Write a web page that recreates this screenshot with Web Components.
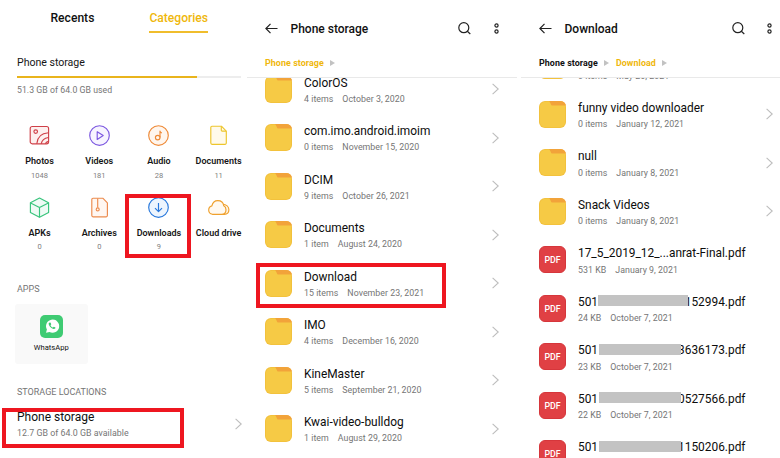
<!DOCTYPE html>
<html lang="en">
<head>
<meta charset="utf-8">
<title>File manager</title>
<style>
html,body{margin:0;height:458px;overflow:hidden;background:#fff}
body{font-family:Roboto,"Liberation Sans",sans-serif;color:#111}
</style>
</head>
<body>
<file-manager></file-manager>
<script>
const define = (name, html) => customElements.define(name, class extends HTMLElement {
  connectedCallback() {
    if (this.shadowRoot) return;
    const root = this.attachShadow({ mode: 'open' });
    const t = document.createElement('template');
    t.innerHTML = typeof html === 'function' ? html(this) : html;
    root.append(t.content.cloneNode(true));
  }
});

const icons = {
  photos: ['#cf4048', '<rect x="1.2" y="1.5" width="18.4" height="17.3" rx="2" fill="#fdf0ef"/><circle cx="6.7" cy="6.6" r="1.8"/><path d="M7.8 18.8C8.3 12.5 12.5 8.2 19.4 7.8M12.2 18.8C12.8 15.4 15.2 13.2 19.4 12.5M16.4 18.8C16.8 17.6 17.6 16.8 19.4 16.4"/>'],
  videos: ['#7c58e0', '<circle cx="10.5" cy="10.5" r="9.8" fill="#f7f4ff"/><path d="M8.2 6.7v7.8l6-3.9z"/>'],
  audio: ['#ee8a38', '<circle cx="10.5" cy="10.5" r="9.8" fill="#fff6ee"/><circle cx="9.7" cy="12.6" r="2.3"/><path d="M12 12.6V6.1c0 1.3.7 1.7 1.9 1.7"/>'],
  documents: ['#edc52c', '<path d="M3.900 1.200h9.500l4.900 4.900v12c0 .8-.4 1.200-1.100 1.200H4c-.8 0-1.200-.4-1.200-1.200V2.400c0-.8.4-1.200 1.100-1.200z" fill="#fffaea"/><path d="M13.300 1.400v3.900c0 .5.3.8.8.8h4"/>'],
  apks: ['#38c47c', '<path d="M10.500 1l9.100 4.800v9.600l-9.100 4.900-9.100-4.900V5.800z" fill="#effbf5"/><path d="M1.600 5.900l8.900 4.600 8.900-4.600M10.500 10.500v9.700"/>'],
  archives: ['#ec8a4c', '<path d="M4 1.200h9.800l4.600 4.600v12.800c0 .8-.4 1.200-1.200 1.200H4c-.8 0-1.200-.4-1.200-1.200V2.400c0-.8.4-1.200 1.200-1.200z" fill="#fff7f2"/><path d="M8.700 1.400v9.200"/><circle cx="8.700" cy="12.400" r="1.500"/>'],
  downloads: ['#2878dc', '<circle cx="10.500" cy="10.500" r="9.800" fill="#edf5fe"/><path d="M10.500 6v8.500M7 11.200l3.500 3.500 3.500-3.500"/>'],
  cloud: ['#efa02c', '<path d="M14.600 7.300c3.700.2 6.300 2.600 6.300 5.500 0 2.600-1.900 4.500-4.600 4.500h-4z" fill="#fff4e4"/><path d="M4.300 17.300a4.300 4.300 0 0 1-.4-8.400C4.600 5.500 6.900 3.600 9.800 3.600c3.200 0 5.600 2.200 5.900 5.100 1.600.8 2.300 2.200 2.300 4 0 2.700-1.900 4.600-4.500 4.600z" fill="#fff9f0"/>']
};

define('category-icon', el => {
  const [c, body] = icons[el.getAttribute('name')];
  return `<style>:host{display:block;width:21px;height:21px}svg{display:block;overflow:visible}</style>
  <svg width="21" height="21" viewBox="0 0 21 21" fill="none" stroke="${c}" stroke-width="1.15" stroke-linejoin="round">${body}</svg>`;
});

define('category-tile', el => `<style>
  :host{display:flex;flex-direction:column;align-items:center;height:71.4px}
  b{font:600 9px/12px Roboto,sans-serif;color:#161616;margin-top:9px;white-space:nowrap}
  small{font-size:7.5px;line-height:10px;color:#808080;margin-top:3.5px}
  </style><category-icon name="${el.getAttribute('icon')}"></category-icon><b><slot></slot></b><small>${el.getAttribute('count') || ''}</small>`);

define('chevron-icon', `<style>:host{display:block;width:7px;height:12px;flex:none}svg{display:block}</style>
  <svg width="7" height="12" viewBox="0 0 7 12" fill="none" stroke="#bdbdbd" stroke-width="1.1"><path d="M.6.8L6.200 6 .6 11.200"/></svg>`);

define('file-icon', el => `<style>:host{display:block;width:27px;height:27px;flex:none}svg{display:block}
  div{box-sizing:border-box;width:27px;height:27px;border-radius:6px;background:#e04044;border:1px solid #d6363b;color:#fff;font:500 8.8px/26px Roboto,sans-serif;text-align:center}</style>` +
  (el.getAttribute('type') === 'pdf' ? '<div>PDF</div>' :
  `<svg width="27" height="27" viewBox="0 0 27 27"><rect width="27" height="27" rx="6" fill="#f2bf3a"/><rect x=".8" y=".8" width="25.4" height="25.4" rx="5.4" fill="#f6ca45"/><path d="M10.200 0H21c3.500 0 5.600 2 6 4.600H13.800c-1.400 0-1.700-.5-2-1.500z" fill="#f2a33a"/></svg>`));

define('file-row', el => {
  const pdf = el.getAttribute('type') === 'pdf';
  const size = el.getAttribute('size');
  return `<style>
  :host{display:flex;height:27px;margin-bottom:21.5px;align-items:center}
  .text{flex:1;margin-left:12px;height:27px;white-space:nowrap}
  .title{font-size:11.9px;line-height:15px;min-height:15px;color:#0c0c0c}
  .sub{display:flex;gap:9px;font-size:8.8px;line-height:12px;letter-spacing:.04px;color:#757575;margin-top:2.1px}
  </style><file-icon type="${pdf ? 'pdf' : 'folder'}"></file-icon>
  <div class="text"><div class="title"><slot></slot></div>${size ? `<div class="sub"><span>${size}</span><span>${el.getAttribute('date')}</span></div>` : ''}</div>
  ${pdf ? '' : '<chevron-icon></chevron-icon>'}`;
});

define('redacted-name', el => `<style>
  :host{display:flex;width:167.5px;justify-content:space-between;position:relative}
  i{position:absolute;top:.5px;height:11px;background:#c3c3c3;left:${el.getAttribute('from')}px;width:${el.getAttribute('length')}px}
  </style><span>${el.getAttribute('start')}</span><span><slot></slot></span><i></i>`);

define('crumb-arrow', `<style>:host{display:block;width:5px;height:6px}svg{display:block}</style><svg width="5" height="6"><path d="M0 0l5 3-5 3z" fill="#c2c2c2"/></svg>`);

define('app-header', `<style>
  :host{display:block;height:78px;box-sizing:border-box;border-bottom:1px solid #e9e9e9}
  .bar{display:flex;align-items:center;height:20px;padding-top:18.5px}
  h1{font:500 12px/20px Roboto,sans-serif;margin:0 0 0 12.5px;flex:1;color:#111}
  .dots{margin-left:22.5px}
  .crumbs{display:flex;align-items:center;gap:6.5px;height:14px;margin-top:17px;font:700 8.9px/14px Roboto,sans-serif;letter-spacing:.08px;color:#111}
  svg{display:block}
  </style>
  <div class="bar"><svg width="13" height="11" fill="none" stroke="#222" stroke-width="1.2"><path d="M12.500 5.500H1M5.500.8L.9 5.500l4.600 4.700"/></svg><h1><slot></slot></h1>
  <svg width="13" height="13" fill="none" stroke="#222" stroke-width="1.2"><circle cx="5.800" cy="5.700" r="5"/><path d="M9.300 9.300l3 2.700"/></svg>
  <svg class="dots" width="5" height="11" fill="none" stroke="#222" stroke-width="1.2"><circle cx="2.500" cy="2.500" r="1.600"/><circle cx="2.500" cy="8.500" r="1.600"/></svg></div>
  <div class="crumbs"><slot name="crumbs"></slot></div>`);

define('highlight-box', `<style>:host{position:absolute;box-sizing:border-box;border:4px solid #ee1620;z-index:3}</style>`);

define('storage-home', `<style>
  :host{display:block;width:247px;height:458px;box-sizing:border-box;padding-left:17px;overflow:hidden}
  nav{display:flex;height:33px;box-sizing:border-box;padding-left:33.5px;font:500 12.1px/16px Roboto,sans-serif}
  nav span{box-sizing:border-box;height:33px;padding-top:9.6px}
  .on{margin-left:55px;color:#efb70c;border-bottom:2px solid #f0bd2c}
  .name{font-size:10.6px;line-height:14px;margin-top:22.5px;letter-spacing:-.03px;color:#161616}
  .track{width:224px;height:2px;background:#ededed;margin-top:6.5px}.track div{width:179.5px;height:2px;background:#e9b41c}
  .used{font-size:8.7px;line-height:12px;color:#757575;margin-top:5.5px;letter-spacing:.05px}
  .grid{display:grid;grid-template-columns:repeat(4,59.7px);margin:29.5px 0 0 -7.3px;height:143px}
  h2{font:400 9px/12px Roboto,sans-serif;color:#757575;margin:15px 0 0}
  .app{width:73px;height:60px;border-radius:3px;background:#f9f9f9;margin:9px 0 0 -2.3px;display:flex;flex-direction:column;align-items:center}
  .app svg{margin-top:11px}.app span{font-size:7.6px;line-height:10px;margin-top:5px;color:#111}
  .locations{margin-top:22px}
  .loc{display:flex;align-items:center;width:224.5px;margin-top:10.5px}
  .loc div{flex:1}.loc p{margin:0;font-size:12px;line-height:16px}
  .loc small{display:block;font-size:8.8px;line-height:12px;color:#757575;margin-top:2.8px;letter-spacing:.03px}
  </style>
  <nav><span>Recents</span><span class="on">Categories</span></nav>
  <div class="name">Phone storage</div><div class="track"><div></div></div><div class="used">51.3 GB of 64.0 GB used</div>
  <div class="grid">
  <category-tile icon="photos" count="1048">Photos</category-tile><category-tile icon="videos" count="181">Videos</category-tile><category-tile icon="audio" count="28">Audio</category-tile><category-tile icon="documents" count="11">Documents</category-tile>
  <category-tile icon="apks" count="0">APKs</category-tile><category-tile icon="archives" count="0">Archives</category-tile><category-tile icon="downloads" count="9">Downloads</category-tile><category-tile icon="cloud">Cloud drive</category-tile></div>
  <h2>APPS</h2>
  <div class="app"><svg width="23" height="23" viewBox="0 0 23 23"><rect width="23" height="23" rx="5" fill="#3fcb73"/><path d="M6 17.800l.9-3.300a6.600 6.600 0 1 1 2.600 2.500z" fill="#fff"/><path d="M8.800 8c-.9 1.900 2.700 6.200 5.200 6 1-.1 1.700-.9 1.400-1.500l-1.500-.8-1.100.9c-1-.4-1.900-1.300-2.300-2.300l.8-1-.7-1.600c-.5-.5-1.400-.3-1.800.3z" fill="#3fcb73"/></svg><span>WhatsApp</span></div>
  <h2 class="locations">STORAGE LOCATIONS</h2>
  <div class="loc"><div><p>Phone storage</p><small>12.7 GB of 64.0 GB available</small></div><chevron-icon></chevron-icon></div>`);

define('browse-panel', `<style>
  :host{display:block;height:458px;overflow:hidden}
  .list{height:380px;overflow:hidden;display:flow-root}
  .list div{margin-top:var(--scroll);padding:0 var(--right) 0 18px}
  </style><slot name="head"></slot><div class="list"><div><slot></slot></div></div>`);

define('file-manager', `<style>
  :host{position:relative;display:flex;width:780px;height:458px;overflow:hidden}
  app-header{padding-left:18px}
  .a{width:270px;--scroll:-2.3px;--right:18px}
  .a app-header{padding-right:18.5px}
  .b{width:259px;margin-left:4px;--scroll:-25.6px;--right:7px}
  .b app-header{padding-right:8px}
  .y{color:#efb70c}
  </style>
  <storage-home></storage-home>
  <browse-panel class="a"><app-header slot="head">Phone storage<span slot="crumbs" class="y">Phone storage</span><crumb-arrow slot="crumbs"></crumb-arrow></app-header>
  <file-row size="4 items" date="October 3, 2020">ColorOS</file-row>
  <file-row size="0 items" date="November 15, 2020">com.imo.android.imoim</file-row>
  <file-row size="9 items" date="October 26, 2021">DCIM</file-row>
  <file-row size="1 item" date="August 24, 2020">Documents</file-row>
  <file-row size="15 items" date="November 23, 2021">Download</file-row>
  <file-row size="4 items" date="December 16, 2020">IMO</file-row>
  <file-row size="5 items" date="September 21, 2020">KineMaster</file-row>
  <file-row size="1 item" date="August 29, 2020">Kwai-video-bulldog</file-row>
  </browse-panel>
  <browse-panel class="b"><app-header slot="head">Download<span slot="crumbs">Phone storage</span><crumb-arrow slot="crumbs"></crumb-arrow><span slot="crumbs" class="y">Download</span><crumb-arrow slot="crumbs"></crumb-arrow></app-header>
  <file-row size="0 items" date="May 26, 2021"></file-row>
  <file-row size="0 items" date="January 12, 2021">funny video downloader</file-row>
  <file-row size="0 items" date="January 8, 2021">null</file-row>
  <file-row size="0 items" date="January 8, 2021">Snack Videos</file-row>
  <file-row type="pdf" size="531 KB" date="January 9, 2021">17_5_2019_12_...anrat-Final.pdf</file-row>
  <file-row type="pdf" size="24 KB" date="October 7, 2021"><redacted-name start="501" from="19.5" length="90">152994.pdf</redacted-name></file-row>
  <file-row type="pdf" size="23 KB" date="October 7, 2021"><redacted-name start="501" from="20.500" length="82">3636173.pdf</redacted-name></file-row>
  <file-row type="pdf" size="22 KB" date="October 7, 2021"><redacted-name start="501" from="20.500" length="82">0527566.pdf</redacted-name></file-row>
  <file-row type="pdf"><redacted-name start="501" from="20.500" length="82">1150206.pdf</redacted-name></file-row>
  </browse-panel>
  <highlight-box style="left:125px;top:194px;width:66px;height:64px"></highlight-box>
  <highlight-box style="left:2px;top:408px;width:182px;height:40px"></highlight-box>
  <highlight-box style="left:256px;top:263px;width:190px;height:45px"></highlight-box>`);
</script>
</body>
</html>
